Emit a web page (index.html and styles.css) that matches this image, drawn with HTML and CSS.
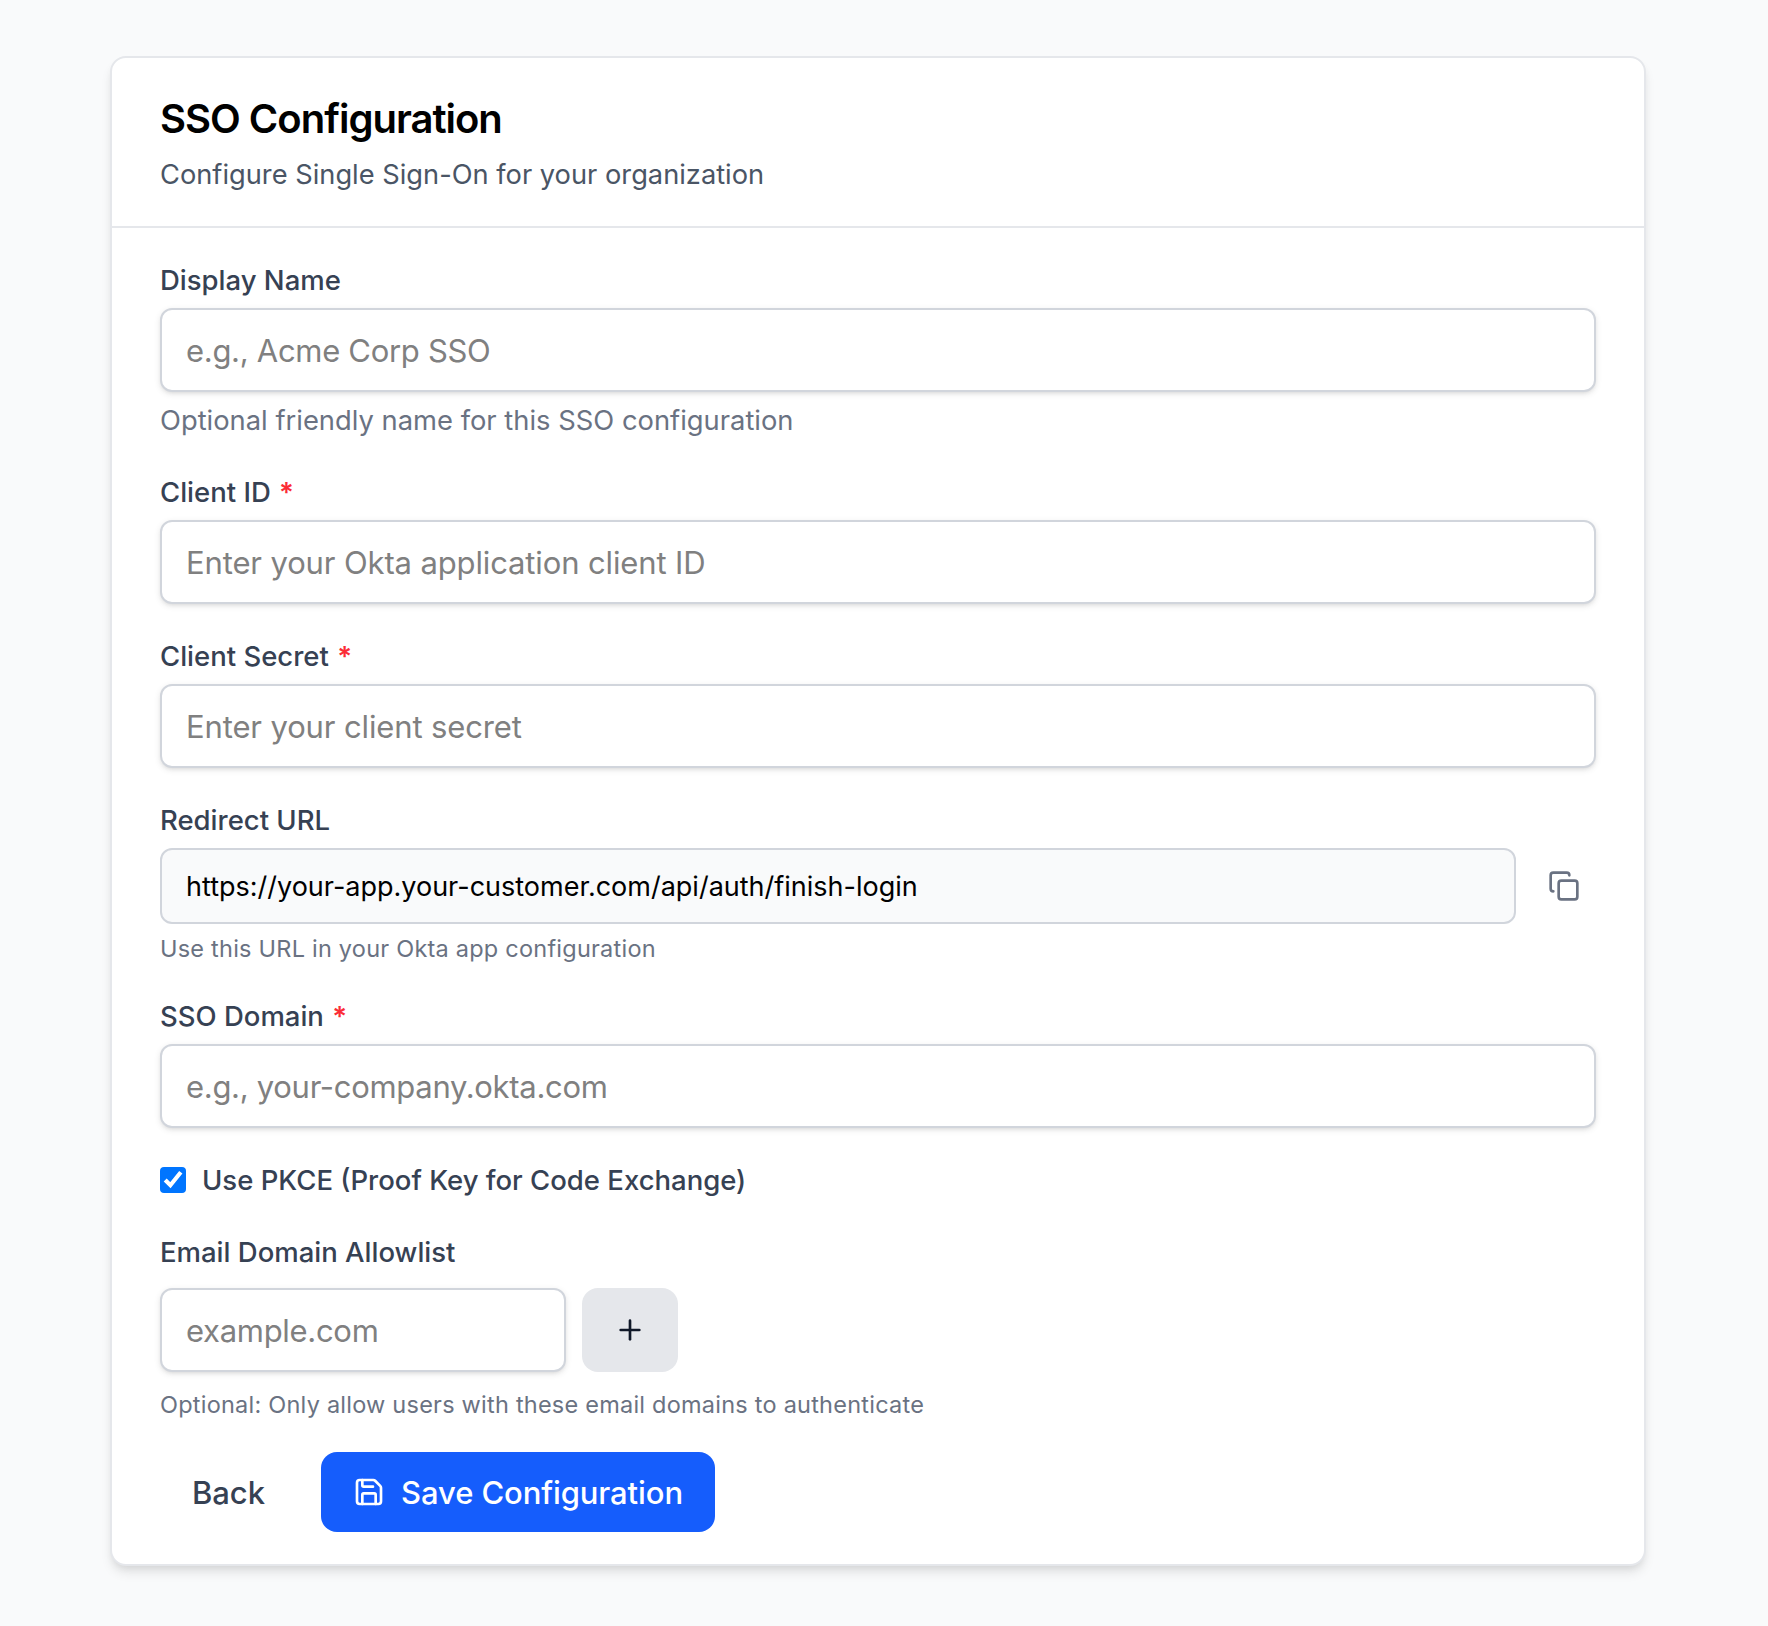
FILE: index.html
```html
<!DOCTYPE html>
<html lang="en">
<head>
  <meta charset="UTF-8">
  <title>SSO Configuration</title>
  <link rel="stylesheet" href="styles.css">
</head>
<body>

  <div class="card">
    <div class="card-header">
      <h1>SSO Configuration</h1>
      <p class="subtitle">Configure Single Sign-On for your organization</p>
    </div>

    <form class="card-body">
      <div class="field">
        <label for="display-name">Display Name</label>
        <input type="text" id="display-name" class="input" placeholder="e.g., Acme Corp SSO">
        <p class="help">Optional friendly name for this SSO configuration</p>
      </div>

      <div class="field">
        <label for="client-id">Client ID <span class="required">*</span></label>
        <input type="text" id="client-id" class="input input-client" placeholder="Enter your Okta application client ID">
      </div>

      <div class="field">
        <label for="client-secret">Client Secret <span class="required">*</span></label>
        <input type="password" id="client-secret" class="input input-client" placeholder="Enter your client secret">
      </div>

      <div class="field">
        <label for="redirect-url">Redirect URL</label>
        <div class="row">
          <input type="text" id="redirect-url" class="input input-readonly" value="https://your-app.your-customer.com/api/auth/finish-login" readonly>
          <button type="button" class="btn-copy" aria-label="Copy">
            <svg class="icon" viewBox="0 0 24 24">
              <rect width="14" height="14" x="8" y="8" rx="2" ry="2"/>
              <path d="M4 16c-1.1 0-2-.9-2-2V4c0-1.1.9-2 2-2h10c1.1 0 2 .9 2 2"/>
            </svg>
          </button>
        </div>
        <p class="help-small">Use this URL in your Okta app configuration</p>
      </div>

      <div class="field">
        <label for="sso-domain">SSO Domain <span class="required">*</span></label>
        <input type="text" id="sso-domain" class="input" placeholder="e.g., your-company.okta.com">
      </div>

      <div class="checkbox-row">
        <input type="checkbox" id="pkce" class="checkbox" checked>
        <label for="pkce">Use PKCE (Proof Key for Code Exchange)</label>
      </div>

      <div class="field allowlist">
        <label for="email-domain">Email Domain Allowlist</label>
        <div class="row">
          <input type="text" id="email-domain" class="input input-domain" placeholder="example.com">
          <button type="button" class="btn-add" aria-label="Add">
            <svg class="icon" viewBox="0 0 24 24">
              <path d="M5 12h14"/>
              <path d="M12 5v14"/>
            </svg>
          </button>
        </div>
        <p class="help-small">Optional: Only allow users with these email domains to authenticate</p>
      </div>

      <div class="actions">
        <button type="button" class="btn btn-back">Back</button>
        <button type="button" class="btn btn-save">
          <svg class="icon" viewBox="0 0 24 24">
            <path d="M15.2 3a2 2 0 0 1 1.4.6l3.8 3.8a2 2 0 0 1 .6 1.4V19a2 2 0 0 1-2 2H5a2 2 0 0 1-2-2V5a2 2 0 0 1 2-2z"/>
            <path d="M17 21v-7a1 1 0 0 0-1-1H8a1 1 0 0 0-1 1v7"/>
            <path d="M7 3v4a1 1 0 0 0 1 1h7"/>
          </svg>
          <span>Save Configuration</span>
        </button>
      </div>
    </form>
  </div>

</body>
</html>
```
FILE: styles.css
```css
* {
  box-sizing: border-box;
}

body {
  font-family: Inter, sans-serif;
  background-color: #f9fafb;
  color: #000;
  margin: 0;
  padding: 56px 110px;
}

h1, p {
  margin: 0;
}

input, button {
  font-family: inherit;
  margin: 0;
}

.card {
  width: 1536px;
  background: white;
  border: 2px solid #e5e7eb;
  border-radius: 16px;
  box-shadow: 0 8px 12px -2px rgba(0,0,0,0.1), 0 4px 8px -4px rgba(0,0,0,0.1);
}

.card-header {
  padding: 32px 48px;
  border-bottom: 2px solid #e5e7eb;
}

h1 {
  padding-top: 2px;
  font-size: 40px;
  line-height: 54px;
  font-weight: 600;
  letter-spacing: -1px;
}

.subtitle {
  margin-top: 8px;
  padding-top: 2px;
  font-size: 27.25px;
  line-height: 38px;
  color: #4a5565;
}

.card-body {
  display: flex;
  flex-direction: column;
  gap: 32px;
  padding: 32px 48px;
}

.field {
  display: flex;
  flex-direction: column;
  gap: 8px;
}

.allowlist {
  gap: 16px;
}

label {
  font-size: 27.5px;
  line-height: 40px;
  font-weight: 500;
  color: #364153;
}

.required {
  margin-left: 1px;
  color: #fb2c36;
  font-weight: 600;
}

.input {
  width: 100%;
  height: 84px;
  padding: 0 24px;
  font-size: 31px;
  letter-spacing: -0.3px;
  background: white;
  border: 2px solid #d1d5dc;
  border-radius: 12px;
  box-shadow: 0 2px 6px rgba(0,0,0,0.1), 0 2px 4px -2px rgba(0,0,0,0.1);
}

.input::placeholder {
  color: #808080;
}

.input-client {
  letter-spacing: -0.13px;
}

.input-readonly {
  flex: 1;
  height: 76px;
  font-size: 27px;
  letter-spacing: 0;
  background: #f9fafb;
  box-shadow: none;
}

.input-domain {
  width: 406px;
}

.help {
  padding-top: 2px;
  font-size: 27.35px;
  line-height: 38px;
  color: #6a7282;
}

.help-small {
  padding-top: 2px;
  font-size: 23.5px;
  line-height: 30px;
  letter-spacing: 0.23px;
  color: #6a7282;
}

.row {
  display: flex;
  align-items: center;
  gap: 16px;
}

.icon {
  width: 32px;
  height: 32px;
  flex-shrink: 0;
  fill: none;
  stroke: currentColor;
  stroke-width: 2;
  stroke-linecap: round;
  stroke-linejoin: round;
}

.btn-copy {
  display: flex;
  padding: 16px;
  background: none;
  border: none;
  color: #6a7282;
}

.btn-add {
  display: flex;
  align-items: center;
  justify-content: center;
  width: 96px;
  height: 84px;
  background: #e5e7eb;
  border: none;
  border-radius: 16px;
  color: #101828;
}

.checkbox-row {
  display: flex;
  align-items: center;
  gap: 16px;
}

.checkbox {
  width: 26px;
  height: 26px;
  clip-path: inset(0 round 4px);
}

.actions {
  display: flex;
  gap: 24px;
}

.btn {
  display: flex;
  align-items: center;
  justify-content: center;
  gap: 16px;
  height: 80px;
  font-size: 31px;
  font-weight: 500;
  border: none;
  border-radius: 16px;
}

.btn-back {
  width: 137px;
  background: none;
  color: #364153;
}

.btn-save {
  width: 394px;
  padding: 0 32px;
  letter-spacing: -0.1px;
  white-space: nowrap;
  background: #155dfc;
  color: white;
}
```
